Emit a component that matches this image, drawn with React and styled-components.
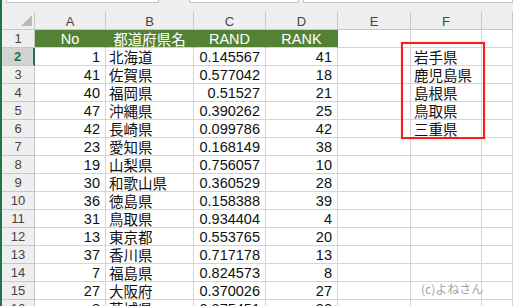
import React from "react";
import styled, { createGlobalStyle, css } from "styled-components";

const GlobalStyle = createGlobalStyle`
  html, body {
    margin: 0;
    padding: 0;
    background: #ffffff;
  }
`;

const GRID = "#d4d4d4";
const HEAD_BG = "#efefef";
const HEAD_LINE = "#c8c8c8";
const EXCEL_GREEN = "#217346";
const FILL_GREEN = "#548235";

const Window = styled.div`
  position: relative;
  width: 513px;
  height: 306px;
  overflow: hidden;
  box-sizing: border-box;
  border-left: 2px solid ${EXCEL_GREEN};
  background: #fff;
  font-family: "Liberation Sans", "Noto Sans CJK JP", sans-serif;
`;

const FormulaStrip = styled.div`
  height: 12px;
  background: ${HEAD_BG};
  display: flex;
  align-items: flex-start;
  padding-left: 4px;
  gap: 30px;
`;

const StripBox = styled.div`
  height: 2px;
  width: ${(p) => p.$w}px;
  flex: ${(p) => (p.$grow ? 1 : "none")};
  background: #fff;
  border: 1px solid #c6c6c6;
  border-top: none;
  margin-left: ${(p) => p.$ml || 0}px;
`;

const Sheet = styled.div`
  display: grid;
  grid-template-columns: 33px 71px 88px 72px 72px 73px 71px 1fr;
  grid-auto-rows: 18px;
`;

const baseCell = css`
  box-sizing: border-box;
  border-right: 1px solid ${GRID};
  border-bottom: 1px solid ${GRID};
  display: flex;
  align-items: center;
  white-space: nowrap;
  overflow: hidden;
`;

const CornerCell = styled.div`
  ${baseCell};
  background: ${HEAD_BG};
  border-color: ${HEAD_LINE};
  justify-content: flex-end;
  align-items: flex-end;
  padding: 0 2px 3px 0;
`;

const Triangle = styled.span`
  width: 0;
  height: 0;
  border-style: solid;
  border-width: 0 0 11px 11px;
  border-color: transparent transparent #b9b9b9 transparent;
`;

const ColHead = styled.div`
  ${baseCell};
  background: ${HEAD_BG};
  border-color: ${HEAD_LINE};
  justify-content: center;
  font-size: 13px;
  color: #444;
  padding-top: 1px;
`;

const RowHead = styled.div`
  ${baseCell};
  background: ${(p) => (p.$active ? "#d3d3d3" : HEAD_BG)};
  border-color: ${HEAD_LINE};
  border-right: ${(p) =>
    p.$active ? `2px solid ${EXCEL_GREEN}` : `1px solid ${HEAD_LINE}`};
  justify-content: center;
  font-size: 13px;
  color: ${(p) => (p.$active ? EXCEL_GREEN : "#444")};
  font-weight: ${(p) => (p.$active ? "bold" : "normal")};
`;

const Cell = styled.div`
  ${baseCell};
  font-size: 14.5px;
  color: #111;
  justify-content: ${(p) => (p.$num ? "flex-end" : "flex-start")};
  padding: ${(p) => (p.$num ? "0 5px 0 0" : "0 0 0 3px")};
`;

const TitleCell = styled.div`
  ${baseCell};
  background: ${FILL_GREEN};
  border-right-color: ${FILL_GREEN};
  justify-content: center;
  color: #fff;
  font-size: 14.5px;
`;

const Highlight = styled.div`
  position: absolute;
  left: 399px;
  top: 42px;
  width: 84px;
  height: 97px;
  box-sizing: border-box;
  border: 2px solid #ff1a1a;
  box-shadow: 0 0 1px rgba(255, 80, 80, 0.6);
  pointer-events: none;
`;

const Watermark = styled.div`
  position: absolute;
  left: 419px;
  top: 280px;
  font-size: 12px;
  color: #a3a3a3;
  font-family: "Noto Sans CJK JP", sans-serif;
`;

const columns = ["A", "B", "C", "D", "E", "F", ""];

const rows = [
  [1, "北海道", "0.145567", 41, "岩手県"],
  [41, "佐賀県", "0.577042", 18, "鹿児島県"],
  [40, "福岡県", "0.51527", 21, "島根県"],
  [47, "沖縄県", "0.390262", 25, "鳥取県"],
  [42, "長崎県", "0.099786", 42, "三重県"],
  [23, "愛知県", "0.168149", 38, ""],
  [19, "山梨県", "0.756057", 10, ""],
  [30, "和歌山県", "0.360529", 28, ""],
  [36, "徳島県", "0.158388", 39, ""],
  [31, "鳥取県", "0.934404", 4, ""],
  [13, "東京都", "0.553765", 20, ""],
  [37, "香川県", "0.717178", 13, ""],
  [7, "福島県", "0.824573", 8, ""],
  [27, "大阪府", "0.370026", 27, ""],
  [8, "茨城県", "0.875451", 33, ""],
];

export default function App() {
  return (
    <>
      <GlobalStyle />
      <Window>
        <FormulaStrip>
          <StripBox $w={151} />
          <StripBox $w={108} />
          <StripBox $grow $ml={-26} />
        </FormulaStrip>
        <Sheet>
          <CornerCell>
            <Triangle />
          </CornerCell>
          {columns.map((c, i) => (
            <ColHead key={i}>{c}</ColHead>
          ))}

          <RowHead>1</RowHead>
          <TitleCell>No</TitleCell>
          <TitleCell>都道府県名</TitleCell>
          <TitleCell>RAND</TitleCell>
          <TitleCell>RANK</TitleCell>
          <Cell />
          <Cell />
          <Cell />

          {rows.map((r, i) => (
            <React.Fragment key={i}>
              <RowHead $active={i === 0}>{i + 2}</RowHead>
              <Cell $num>{r[0]}</Cell>
              <Cell>{r[1]}</Cell>
              <Cell $num>{r[2]}</Cell>
              <Cell $num>{r[3]}</Cell>
              <Cell />
              <Cell>{r[4]}</Cell>
              <Cell />
            </React.Fragment>
          ))}
        </Sheet>
        <Highlight />
        <Watermark>(c)よねさん</Watermark>
      </Window>
    </>
  );
}
